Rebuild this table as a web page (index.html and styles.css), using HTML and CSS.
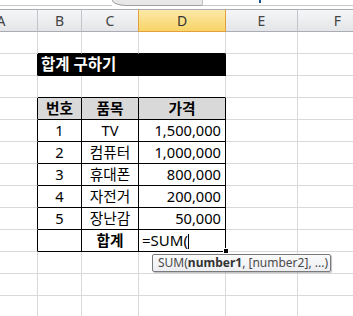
FILE: index.html
```html
<!DOCTYPE html>
<html>
<head>
<meta charset="utf-8">
<link rel="stylesheet" href="styles.css">
</head>
<body>
<div class="topbar">
  <div class="tb-left"></div>
  <div class="tb-tab"></div>
  <div class="tb-right"><span class="tb-mark"></span></div>
</div>
<div class="sheet">
  <div class="hd">A</div><div class="hd">B</div><div class="hd">C</div><div class="hd sel">D</div><div class="hd">E</div><div class="hd last">F</div>

  <div class="c"></div><div class="c tb"></div><div class="c tb"></div><div class="c tb"></div><div class="c"></div><div class="c"></div>

  <div class="c lb"></div><div class="c title">합계 구하기</div><div class="c"></div><div class="c"></div>

  <div class="c"></div><div class="c tb"></div><div class="c tb"></div><div class="c tb"></div><div class="c"></div><div class="c"></div>

  <div class="c lb"></div><div class="c t th">번호</div><div class="c t th">품목</div><div class="c t th">가격</div><div class="c"></div><div class="c"></div>

  <div class="c lb"></div><div class="c t ctr">1</div><div class="c t ctr">TV</div><div class="c t num">1,500,000</div><div class="c"></div><div class="c"></div>
  <div class="c lb"></div><div class="c t ctr">2</div><div class="c t ctr">컴퓨터</div><div class="c t num">1,000,000</div><div class="c"></div><div class="c"></div>
  <div class="c lb"></div><div class="c t ctr">3</div><div class="c t ctr">휴대폰</div><div class="c t num">800,000</div><div class="c"></div><div class="c"></div>
  <div class="c lb"></div><div class="c t ctr">4</div><div class="c t ctr">자전거</div><div class="c t num">200,000</div><div class="c"></div><div class="c"></div>
  <div class="c lb"></div><div class="c t ctr">5</div><div class="c t ctr">장난감</div><div class="c t num">50,000</div><div class="c"></div><div class="c"></div>
  <div class="c lb"></div><div class="c t"></div><div class="c t th-plain">합계</div><div class="c t edit">=SUM(<span class="caret"></span></div><div class="c"></div><div class="c"></div>

  <div class="c"></div><div class="c"></div><div class="c"></div><div class="c"></div><div class="c"></div><div class="c"></div>
  <div class="c"></div><div class="c"></div><div class="c"></div><div class="c"></div><div class="c"></div><div class="c"></div>
  <div class="c"></div><div class="c"></div><div class="c"></div><div class="c"></div><div class="c"></div><div class="c"></div>
</div>
<span class="fill-handle"></span>
<div class="tooltip">SUM(<b>number1</b>, [number2], ...)</div>
</body>
</html>
```

FILE: styles.css
```css
html, body {
  margin: 0;
  padding: 0;
  background: #ffffff;
  overflow: hidden;
}
body {
  width: 353px;
  height: 316px;
  position: relative;
  font-family: "Noto Sans", "Noto Sans CJK KR", sans-serif;
}
.topbar {
  display: flex;
  height: 9px;
}
.tb-left {
  width: 112px;
  height: 6px;
  box-sizing: border-box;
  border-bottom: 1px solid #c8c8c8;
}
.tb-tab {
  width: 90px;
  height: 6px;
  box-sizing: border-box;
  background: #e8e8e8;
  border-left: 1px solid #a8a8a8;
  border-bottom: 1px solid #a0a0a0;
  border-bottom-left-radius: 14px 6px;
}
.tb-right {
  flex: 1;
  height: 6px;
  box-sizing: border-box;
  border-bottom: 1px solid #c8c8c8;
  border-left: 1px solid #c0c0c0;
}
.tb-mark {
  display: block;
  width: 2px;
  height: 3px;
  margin-left: 56px;
  background: #1d4f8c;
}
.sheet {
  display: grid;
  grid-template-columns: 73px 44px 57px 87px 72px 80px;
  grid-template-rows: 23px;
  grid-auto-rows: 22px;
  margin-left: -35px;
}
.hd {
  box-sizing: border-box;
  border-top: 1px solid #a9adb3;
  border-bottom: 1px solid #a9adb3;
  border-right: 1px solid #c2c5ca;
  background: linear-gradient(#f5f6f7, #e3e5e8);
  font-size: 14px;
  line-height: 21px;
  text-align: center;
  color: #444444;
}
.hd.sel {
  background: linear-gradient(#fce9a9, #f8d467);
  border-left: 1px solid #e3a03d;
  border-right: 1px solid #e3a03d;
  border-bottom: 1px solid #e3a03d;
  margin-left: -1px;
  color: #333333;
}
.c {
  box-sizing: border-box;
  border-right: 1px solid #d9d9d9;
  border-bottom: 1px solid #d9d9d9;
  font-size: 14.67px;
  line-height: 21px;
  color: #000000;
  white-space: nowrap;
  overflow: hidden;
}
.c.tb { border-bottom-color: #000000; }
.c.lb { border-right-color: #000000; }
.c.t {
  border-right-color: #000000;
  border-bottom-color: #000000;
}
.c.title {
  grid-column: span 3;
  background: #000000;
  border-right-color: #000000;
  border-bottom-color: #000000;
  color: #ffffff;
  font-size: 15.5px;
  font-weight: bold;
  padding-left: 3px;
}
.c.th {
  background: #d9d9d9;
  font-weight: bold;
  text-align: center;
}
.c.th-plain {
  font-weight: bold;
  text-align: center;
}
.c.ctr { text-align: center; }
.c.num {
  text-align: right;
  padding-right: 4px;
}
.c.edit {
  padding-left: 3px;
  overflow: visible;
  font-size: 15px;
}
.caret {
  display: inline-block;
  width: 1px;
  height: 15px;
  background: #000000;
  vertical-align: -3px;
}
.fill-handle {
  position: absolute;
  left: 223px;
  top: 248px;
  width: 4px;
  height: 4px;
  background: #000000;
  border: 1px solid #ffffff;
}
.tooltip {
  position: absolute;
  left: 152px;
  top: 254px;
  width: 179px;
  height: 18px;
  box-sizing: border-box;
  border: 1px solid #7a7a7a;
  border-radius: 2px;
  background: linear-gradient(#fbfbfb, #eceef2);
  box-shadow: 1px 1px 1px rgba(0, 0, 0, 0.25);
  font-size: 12px;
  line-height: 16px;
  padding-left: 5px;
  color: #4a4a4a;
  white-space: nowrap;
}
.tooltip b { color: #333333; }
```
